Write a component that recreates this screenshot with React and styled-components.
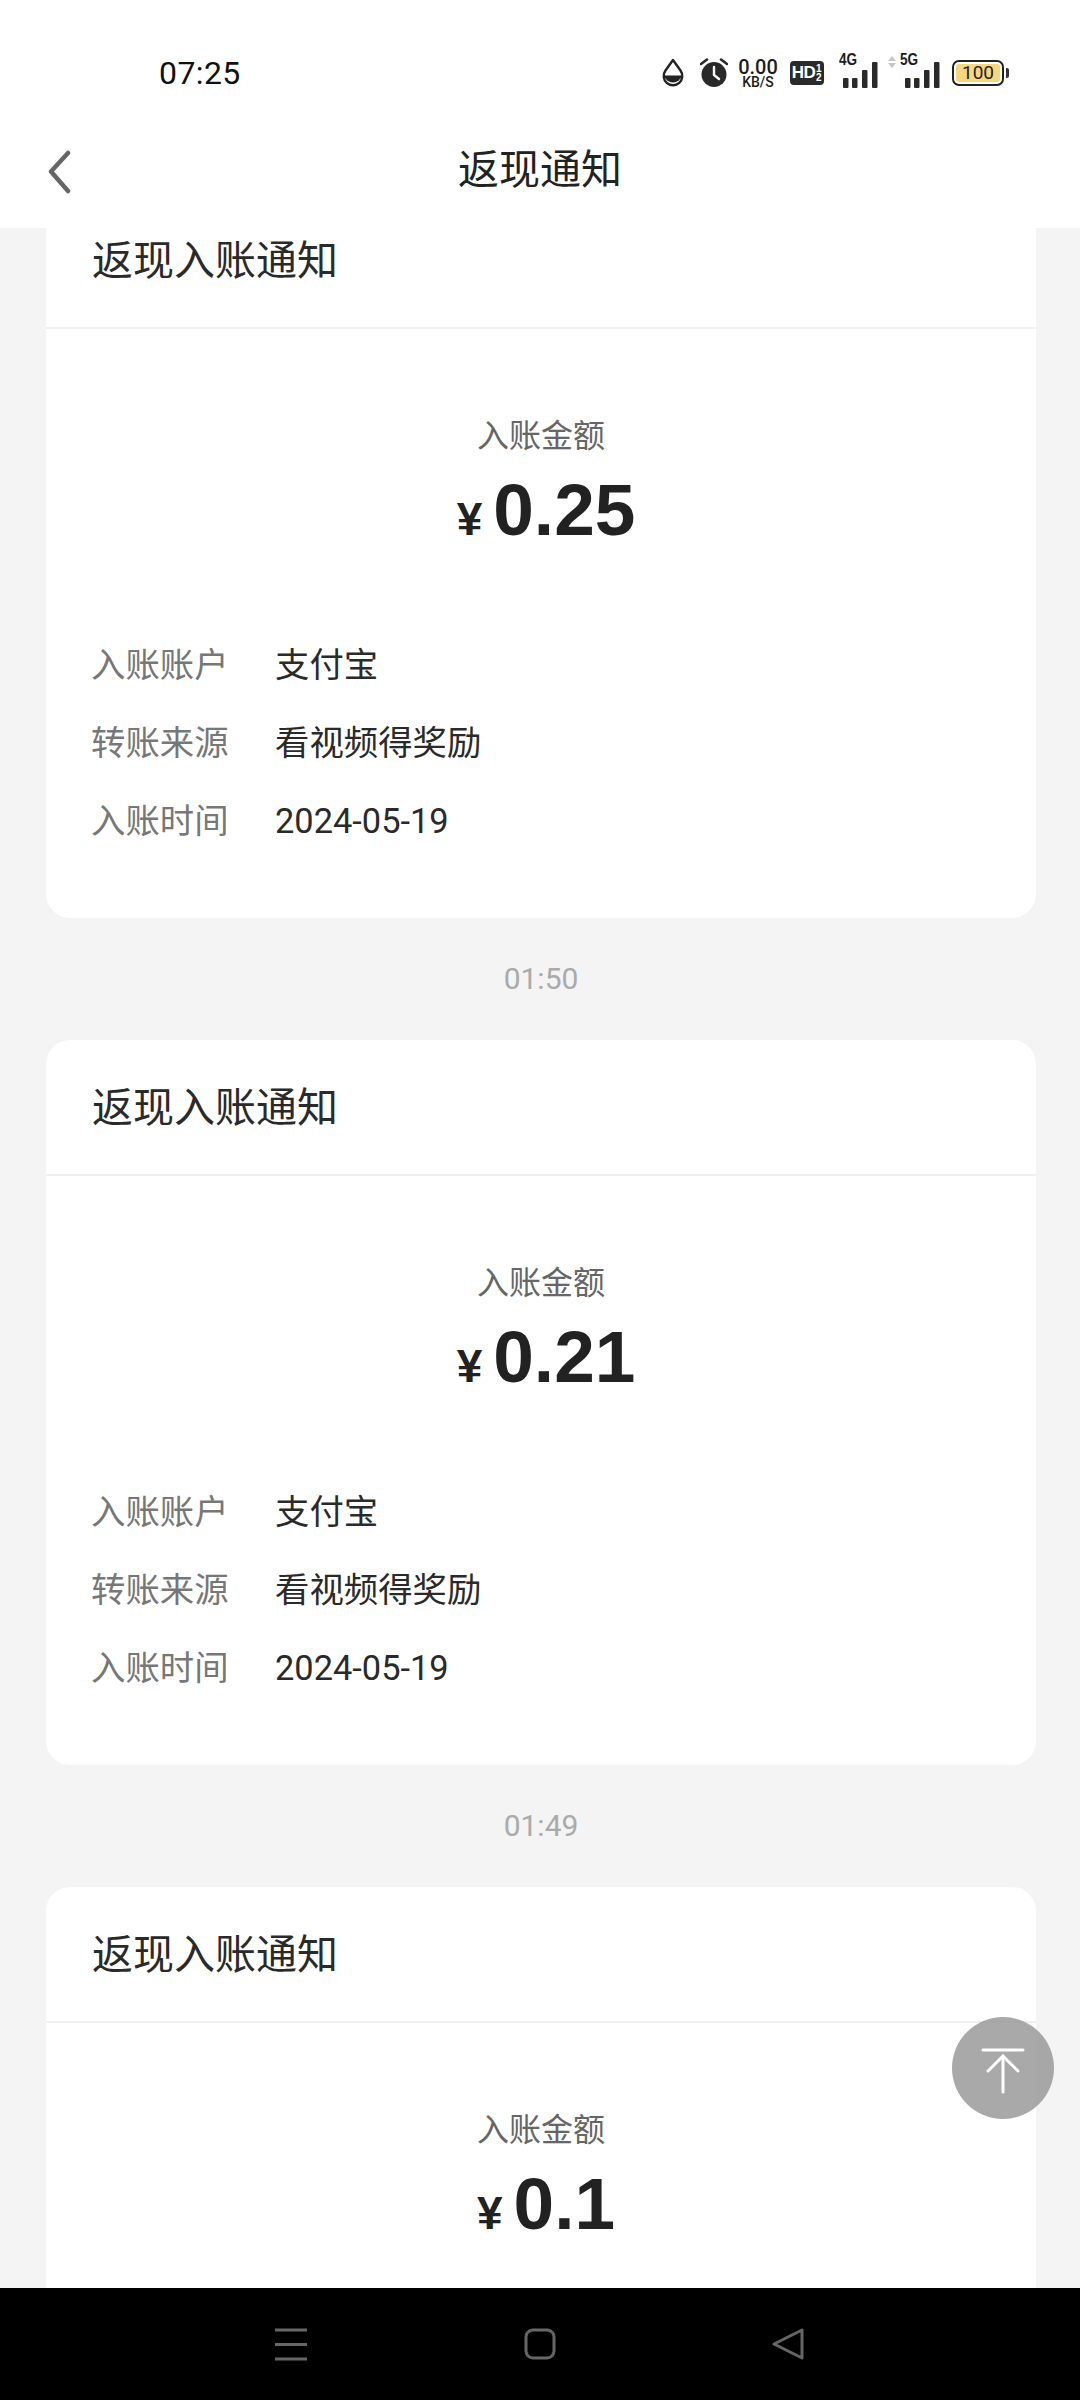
import React from "react";
import styled, { createGlobalStyle } from "styled-components";

const Global = createGlobalStyle`
  html, body { margin: 0; padding: 0; background: #f4f4f4; }
  * { box-sizing: border-box; }
  body { font-family: "Noto Sans CJK SC", "Noto Sans", sans-serif; }
`;

const Page = styled.div`
  position: relative;
  width: 1080px;
  height: 2400px;
  display: flex;
  flex-direction: column;
  overflow: hidden;
  background: #f4f4f4;
`;
const TopArea = styled.header`
  height: 228px;
  background: #fff;
  display: flex;
  flex-direction: column;
  flex: none;
  position: relative;
  z-index: 2;
`;
const StatusBar = styled.div`
  height: 130px;
  padding: 16px 76px 0 159px;
  display: flex;
  align-items: center;
  justify-content: space-between;
`;
const Clock = styled.span`
  font-family: Roboto, sans-serif;
  font-size: 32px;
  color: #111;
  letter-spacing: 0.4px;
`;
const StatusIcons = styled.div`
  display: flex;
  align-items: center;
  height: 40px;
`;
const Speed = styled.div`
  width: 44px;
  margin: 0 10px 0 8px;
  display: flex;
  flex-direction: column;
  align-items: center;
  font-family: Roboto, sans-serif;
  color: #1c1c1c;
  & > b { font-size: 20px; line-height: 20px; height: 18px; font-weight: 500; }
  & > small { font-size: 14px; line-height: 14px; font-weight: 500; }
`;
const Hd = styled.div`
  width: 34px;
  height: 24px;
  background: #2a2a2a;
  border-radius: 4px;
  color: #fff;
  font: 700 17px/24px "Liberation Sans", sans-serif;
  display: flex;
  align-items: center;
  justify-content: center;
  margin-right: 15px;
  letter-spacing: -0.5px;
  & > i { font-style: normal; font-size: 10px; line-height: 9px; width: 7px; text-align: center; letter-spacing: 0; }
`;
const Signal = styled.div`
  position: relative;
  width: ${(p) => p.$w}px;
  height: 30px;
  margin-right: ${(p) => p.$mr}px;
  flex: none;
  & > span {
    position: absolute;
    left: ${(p) => p.$tx}px;
    top: -6px;
    font: 700 17px/16px "Liberation Sans", sans-serif;
    color: #1c1c1c;
    transform: scaleX(0.8);
    transform-origin: left;
  }
  & > svg { position: absolute; right: 0; bottom: 0; }
`;
const Battery = styled.div`
  width: 52px;
  height: 26px;
  border: 2px solid #222;
  border-radius: 7px;
  padding: 2px;
  display: flex;
  position: relative;
  &::after {
    content: "";
    position: absolute;
    right: -7px;
    top: 6px;
    width: 3px;
    height: 10px;
    background: #333;
    border-radius: 0 2px 2px 0;
  }
  & > span {
    flex: 1;
    background: #f6d67f;
    border-radius: 3px;
    font: 400 19px/18px Roboto, sans-serif;
    color: #222;
    text-align: center;
  }
`;
const NavBar = styled.div`
  flex: 1;
  position: relative;
  display: flex;
  align-items: center;
  justify-content: center;
  padding-bottom: 26px;
`;
const BackButton = styled.div`
  position: absolute;
  left: 47px;
  top: 20px;
  width: 24px;
  height: 44px;
  display: flex;
`;
const Title = styled.h1`
  margin: 0;
  font-size: 41px;
  line-height: 56px;
  font-weight: 400;
  color: #222;
`;
const Scroll = styled.main`
  flex: 1;
  min-height: 0;
  overflow: hidden;
`;
const List = styled.div`
  margin-top: -35px;
  padding: 0 44px 0 46px;
  display: flex;
  flex-direction: column;
`;
const Card = styled.section`
  background: #fff;
  border-radius: 24px;
  height: 725px;
  flex: none;
`;
const CardHead = styled.div`
  height: 136px;
  padding: 0 0 6px 46px;
  display: flex;
  align-items: center;
  border-bottom: 2px solid #f0f0f0;
  font-size: 41px;
  color: #2a2a2a;
`;
const AmountBlock = styled.div`
  padding-top: 81px;
  display: flex;
  flex-direction: column;
  align-items: center;
`;
const AmountLabel = styled.div`
  font-size: 32px;
  line-height: 46px;
  color: #666;
`;
const Amount = styled.div`
  margin-top: 12px;
  margin-left: 10px;
  display: flex;
  align-items: baseline;
  height: 84px;
  color: #222;
  font-family: "Liberation Sans", Arial, sans-serif;
  font-weight: 700;
  & > span { font-size: 46px; margin-right: 11px; }
  & > b { font-size: 73px; line-height: 84px; }
`;
const Rows = styled.div`
  margin-top: 86px;
  padding-left: 46px;
  display: flex;
  flex-direction: column;
  gap: 30px;
`;
const Row = styled.div`
  display: flex;
  align-items: baseline;
  height: 48px;
  font-size: 34.4px;
  line-height: 48px;
`;
const RowLabel = styled.span`
  width: 184px;
  margin-left: -1px;
  color: #777;
  flex: none;
`;
const RowValue = styled.span`
  color: #2a2a2a;
  font-family: Roboto, "Noto Sans CJK SC", sans-serif;
`;
const Stamp = styled.div`
  height: 122px;
  padding-bottom: 2px;
  display: flex;
  align-items: center;
  justify-content: center;
  font-family: Roboto, sans-serif;
  font-size: 30px;
  color: #aaa;
`;
const TopFab = styled.div`
  position: absolute;
  left: 952px;
  top: 2017px;
  width: 102px;
  height: 102px;
  padding-top: 5px;
  border-radius: 50%;
  background: rgba(145, 145, 145, 0.78);
  display: flex;
  align-items: center;
  justify-content: center;
  z-index: 3;
`;
const BottomBar = styled.footer`
  height: 112px;
  flex: none;
  background: #000;
  position: relative;
  z-index: 2;
  display: flex;
  align-items: center;
  padding-left: 274px;
  & > svg { flex: none; }
`;

const data = [
  { id: 1, amount: "0.25", stamp: "01:50", rows: true },
  { id: 2, amount: "0.21", stamp: "01:49", rows: true },
  { id: 3, amount: "0.1", rows: false },
];

function Notice({ amount, rows }) {
  return (
    <Card>
      <CardHead>返现入账通知</CardHead>
      <AmountBlock>
        <AmountLabel>入账金额</AmountLabel>
        <Amount>
          <span>¥</span>
          <b>{amount}</b>
        </Amount>
      </AmountBlock>
      {rows && (
        <Rows>
          <Row><RowLabel>入账账户</RowLabel><RowValue>支付宝</RowValue></Row>
          <Row><RowLabel>转账来源</RowLabel><RowValue>看视频得奖励</RowValue></Row>
          <Row><RowLabel>入账时间</RowLabel><RowValue>2024-05-19</RowValue></Row>
        </Rows>
      )}
    </Card>
  );
}

const Bars = () => (
  <svg width="36" height="26" viewBox="0 0 36 26" fill="#2a2a2a">
    <rect x="1" y="16" width="5.5" height="10" rx="1" />
    <rect x="10" y="16" width="5.5" height="10" rx="1" />
    <rect x="20" y="8" width="5.5" height="18" rx="1" />
    <rect x="30" y="0" width="5.5" height="26" rx="1" />
  </svg>
);

export default function App() {
  return (
    <Page>
      <Global />
      <TopArea>
        <StatusBar>
          <Clock>07:25</Clock>
          <StatusIcons>
            <svg width="22" height="30" viewBox="0 0 22 30" style={{ marginRight: 16 }}>
              <path d="M11 2 L18.5 12.5 A9.3 9.3 0 1 1 3.5 12.5 Z" fill="#fff" stroke="#222" strokeWidth="2.4" strokeLinejoin="round" />
              <path d="M2.2 17.5 H19.8 A9 9 0 0 1 2.2 17.5 Z" fill="#222" />
            </svg>
            <svg width="28" height="30" viewBox="0 0 28 30">
              <circle cx="14" cy="16.5" r="12.5" fill="#2a2a2a" />
              <path d="M14 9 V17 L19 21" fill="none" stroke="#fff" strokeWidth="2.4" strokeLinecap="round" />
              <path d="M1 6 L7 1.5 M27 6 L21 1.5" stroke="#2a2a2a" strokeWidth="2.6" strokeLinecap="round" />
            </svg>
            <Speed><b>0.00</b><small>KB/S</small></Speed>
            <Hd>HD<i>1<br />2</i></Hd>
            <Signal $w={39} $mr={10} $tx={0}><span>4G</span><Bars /></Signal>
            <Signal $w={52} $mr={12} $tx={12}>
              <svg width="8" height="12" viewBox="0 0 8 12" style={{ left: 0, top: -2, right: "auto", bottom: "auto" }}>
                <path d="M4 0 L8 5 H0 Z M4 12 L8 7 H0 Z" fill="#c4c4c4" />
              </svg>
              <span>5G</span>
              <Bars />
            </Signal>
            <Battery><span>100</span></Battery>
          </StatusIcons>
        </StatusBar>
        <NavBar>
          <BackButton>
            <svg width="24" height="44" viewBox="0 0 24 44">
              <path d="M21 3 L4 21.5 L21 41" fill="none" stroke="#666" strokeWidth="4.5" strokeLinecap="round" strokeLinejoin="round" />
            </svg>
          </BackButton>
          <Title>返现通知</Title>
        </NavBar>
      </TopArea>
      <Scroll>
        <List>
          {data.map((d) => (
            <React.Fragment key={d.id}>
              <Notice amount={d.amount} rows={d.rows} />
              {d.stamp && <Stamp>{d.stamp}</Stamp>}
            </React.Fragment>
          ))}
        </List>
      </Scroll>
      <TopFab>
        <svg width="44" height="46" viewBox="0 0 44 46" fill="none" stroke="#fff" strokeWidth="3" strokeLinecap="round">
          <path d="M2 2 H42" />
          <path d="M22 8 V44" />
          <path d="M7 23 L22 8 L37 23" />
        </svg>
      </TopFab>
      <BottomBar>
        <svg width="34" height="33" viewBox="0 0 34 33" stroke="#666" strokeWidth="3">
          <path d="M1 2 H33 M1 16.5 H33 M1 31 H33" />
        </svg>
        <svg width="32" height="32" viewBox="0 0 32 32" fill="none" stroke="#666" strokeWidth="3" style={{ marginLeft: 216 }}>
          <rect x="2" y="2" width="28" height="28" rx="7" />
        </svg>
        <svg width="32" height="32" viewBox="0 0 32 32" fill="none" stroke="#666" strokeWidth="3" strokeLinejoin="round" style={{ marginLeft: 216 }}>
          <path d="M30 2 V30 L2 16 Z" />
        </svg>
      </BottomBar>
    </Page>
  );
}
